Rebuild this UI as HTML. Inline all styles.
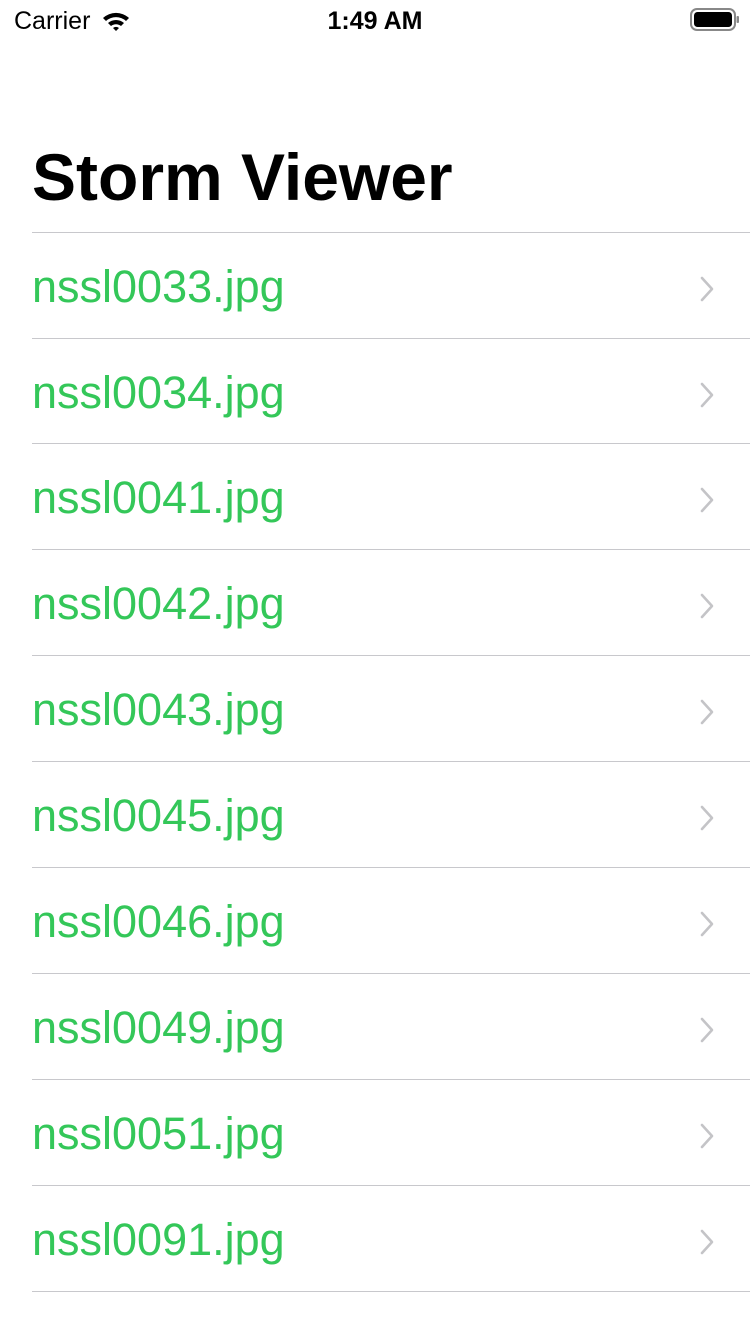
<!DOCTYPE html>
<html><head><meta charset="utf-8"><style>
html,body{margin:0;padding:0;background:#fff;width:750px;height:1334px;overflow:hidden;font-family:"Liberation Sans",sans-serif;}
.sb{position:absolute;top:0;left:0;width:750px;height:40px;}
.carrier{position:absolute;left:14px;top:7px;font-size:25px;color:#000;}
.time{position:absolute;left:0;width:750px;text-align:center;top:7px;font-size:25px;font-weight:600;color:#000;}
h1{position:absolute;left:32px;top:139px;margin:0;font-size:66px;font-weight:bold;color:#000;}
.row{position:absolute;left:32px;width:718px;height:106px;border-top:1.5px solid #c8c8cc;}
.row span{position:absolute;left:0;top:28px;font-size:45px;color:#34c759;line-height:52px;}
.row svg{position:absolute;left:666px;top:42px;}
.last{position:absolute;left:32px;width:718px;top:1291px;border-top:1.5px solid #c8c8cc;}
</style></head><body>
<div class="sb">
<div class="carrier">Carrier</div>
<svg style="position:absolute;left:101px;top:10px" width="30" height="22" viewBox="0 0 30 22"><path d="M2 8 A19 19 0 0 1 28 8 L25 11 A15 15 0 0 0 5 11Z" fill="#000"/><path d="M7 13 A12 12 0 0 1 23 13 L20 16 A8 8 0 0 0 10 16Z" fill="#000"/><path d="M12 18 A5 5 0 0 1 18 18 L15 21Z" fill="#000"/></svg>
<div class="time">1:49 AM</div>
<svg style="position:absolute;left:690px;top:8px" width="50" height="24" viewBox="0 0 50 24"><rect x="1" y="1" width="44" height="21" rx="6" fill="none" stroke="#888" stroke-width="2"/><rect x="4" y="4" width="38" height="15" rx="3.5" fill="#000"/><rect x="46.5" y="8" width="2.5" height="7" rx="1" fill="#888"/></svg>
</div>
<h1>Storm Viewer</h1>
<div class="row" style="top:232px"><span>nssl0033.jpg</span><svg width="20" height="28" viewBox="0 0 20 28"><path d="M4 3 L14 14 L4 25" fill="none" stroke="#c4c4c7" stroke-width="2.6" stroke-linecap="round" stroke-linejoin="round"/></svg></div>
<div class="row" style="top:338px"><span>nssl0034.jpg</span><svg width="20" height="28" viewBox="0 0 20 28"><path d="M4 3 L14 14 L4 25" fill="none" stroke="#c4c4c7" stroke-width="2.6" stroke-linecap="round" stroke-linejoin="round"/></svg></div>
<div class="row" style="top:443px"><span>nssl0041.jpg</span><svg width="20" height="28" viewBox="0 0 20 28"><path d="M4 3 L14 14 L4 25" fill="none" stroke="#c4c4c7" stroke-width="2.6" stroke-linecap="round" stroke-linejoin="round"/></svg></div>
<div class="row" style="top:549px"><span>nssl0042.jpg</span><svg width="20" height="28" viewBox="0 0 20 28"><path d="M4 3 L14 14 L4 25" fill="none" stroke="#c4c4c7" stroke-width="2.6" stroke-linecap="round" stroke-linejoin="round"/></svg></div>
<div class="row" style="top:655px"><span>nssl0043.jpg</span><svg width="20" height="28" viewBox="0 0 20 28"><path d="M4 3 L14 14 L4 25" fill="none" stroke="#c4c4c7" stroke-width="2.6" stroke-linecap="round" stroke-linejoin="round"/></svg></div>
<div class="row" style="top:761px"><span>nssl0045.jpg</span><svg width="20" height="28" viewBox="0 0 20 28"><path d="M4 3 L14 14 L4 25" fill="none" stroke="#c4c4c7" stroke-width="2.6" stroke-linecap="round" stroke-linejoin="round"/></svg></div>
<div class="row" style="top:867px"><span>nssl0046.jpg</span><svg width="20" height="28" viewBox="0 0 20 28"><path d="M4 3 L14 14 L4 25" fill="none" stroke="#c4c4c7" stroke-width="2.6" stroke-linecap="round" stroke-linejoin="round"/></svg></div>
<div class="row" style="top:973px"><span>nssl0049.jpg</span><svg width="20" height="28" viewBox="0 0 20 28"><path d="M4 3 L14 14 L4 25" fill="none" stroke="#c4c4c7" stroke-width="2.6" stroke-linecap="round" stroke-linejoin="round"/></svg></div>
<div class="row" style="top:1079px"><span>nssl0051.jpg</span><svg width="20" height="28" viewBox="0 0 20 28"><path d="M4 3 L14 14 L4 25" fill="none" stroke="#c4c4c7" stroke-width="2.6" stroke-linecap="round" stroke-linejoin="round"/></svg></div>
<div class="row" style="top:1185px"><span>nssl0091.jpg</span><svg width="20" height="28" viewBox="0 0 20 28"><path d="M4 3 L14 14 L4 25" fill="none" stroke="#c4c4c7" stroke-width="2.6" stroke-linecap="round" stroke-linejoin="round"/></svg></div>
<div class="last"></div>
</body></html>
